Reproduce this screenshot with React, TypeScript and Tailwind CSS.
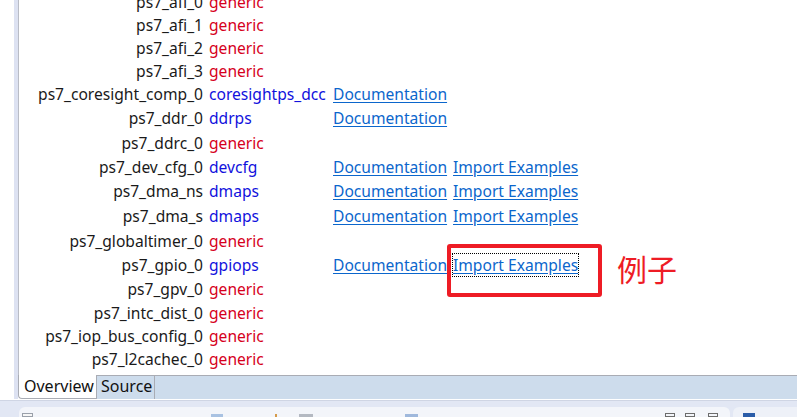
import React from 'react';

type Row = {
  name: string;
  type: string;
  generic: boolean;
  doc?: boolean;
  examples?: boolean;
  h: string;
};

const rows: Row[] = [
  { name: 'ps7_afi_0', type: 'generic', generic: true, h: 'h-[23px]' },
  { name: 'ps7_afi_1', type: 'generic', generic: true, h: 'h-[23px]' },
  { name: 'ps7_afi_2', type: 'generic', generic: true, h: 'h-[23px]' },
  { name: 'ps7_afi_3', type: 'generic', generic: true, h: 'h-[23px]' },
  { name: 'ps7_coresight_comp_0', type: 'coresightps_dcc', generic: false, doc: true, h: 'h-[24px]' },
  { name: 'ps7_ddr_0', type: 'ddrps', generic: false, doc: true, h: 'h-[24px]' },
  { name: 'ps7_ddrc_0', type: 'generic', generic: true, h: 'h-[25px]' },
  { name: 'ps7_dev_cfg_0', type: 'devcfg', generic: false, doc: true, examples: true, h: 'h-[24px]' },
  { name: 'ps7_dma_ns', type: 'dmaps', generic: false, doc: true, examples: true, h: 'h-[24px]' },
  { name: 'ps7_dma_s', type: 'dmaps', generic: false, doc: true, examples: true, h: 'h-[25px]' },
  { name: 'ps7_globaltimer_0', type: 'generic', generic: true, h: 'h-[25px]' },
  { name: 'ps7_gpio_0', type: 'gpiops', generic: false, doc: true, examples: true, h: 'h-[24px]' },
  { name: 'ps7_gpv_0', type: 'generic', generic: true, h: 'h-[24px]' },
  { name: 'ps7_intc_dist_0', type: 'generic', generic: true, h: 'h-[23px]' },
  { name: 'ps7_iop_bus_config_0', type: 'generic', generic: true, h: 'h-[23px]' },
  { name: 'ps7_l2cachec_0', type: 'generic', generic: true, h: 'h-[23px]' },
];

const font = "font-['Noto_Sans','Liberation_Sans',sans-serif]";

export default function App() {
  return (
    <div className={`w-[797px] h-[417px] bg-white overflow-hidden flex flex-col text-[15.6px] ${font}`}>
      {/* editor body */}
      <div className="h-[375px] flex">
        <div className="w-[14px] bg-white" />
        <div className="w-[4px] bg-[#dde2f2]" />
        <div className="w-[1px] bg-[#b9bcc6]" />
        <div className="flex-1 relative overflow-hidden">
          <div className="mt-[-9px] flex flex-col">
            {rows.map((r) => (
              <div key={r.name} className={`flex items-center ${r.h}`}>
                <div className="w-[184px] text-right text-[#1a1a1a] whitespace-nowrap">{r.name}</div>
                <div className={`ml-[6px] w-[124px] whitespace-nowrap ${r.generic ? 'text-[#d6001c]' : 'text-[#1111dd]'}`}>
                  {r.type}
                </div>
                <div className="w-[120px] whitespace-nowrap">
                  {r.doc && <span className="text-[#0b66cc] underline underline-offset-2">Documentation</span>}
                </div>
                <div className="whitespace-nowrap">
                  {r.examples && (
                    <span
                      className={`text-[#0b66cc] underline underline-offset-2 ${
                        r.name === 'ps7_gpio_0' ? 'outline outline-1 outline-dotted outline-black' : ''
                      }`}
                    >
                      Import Examples
                    </span>
                  )}
                </div>
              </div>
            ))}
          </div>

          {/* annotation */}
          <div className="absolute left-[428px] top-[244px] w-[155px] h-[53px] border-[4px] border-[#ee1c25] rounded-[3px]" />
          <div className="absolute left-[598px] top-[249px] text-[30px] leading-[38px] text-[#ee1c25] font-['Noto_Sans_CJK_SC',sans-serif]">
            例子
          </div>
        </div>
      </div>

      {/* tab bar */}
      <div className="h-[24px] flex text-[16px]">
        <div className="w-[14px] bg-white" />
        <div className="w-[4px] bg-[#dde2f2]" />
        <div className="w-[78px] bg-white border-l border-b border-[#a9acb4] rounded-bl-[4px] pl-[5px] leading-[22px] text-[#111]">
          Overview
        </div>
        <div className="w-[59px] bg-[#cddcec] border-t border-l border-r border-[#a9acb4] pl-[4px] leading-[21px] text-[#111]">
          Source
        </div>
        <div className="flex-1 bg-[#cddcec] border-t border-[#a9acb4]" />
      </div>

      {/* bottom area */}
      <div className="flex-1 bg-[#e2e7f4] border-t border-white flex flex-col">
        <div className="h-[1px] bg-[#cfd5e4]" />
        <div className="flex-1 flex items-end gap-[3px] pl-[19px]">
          <div className="w-[711px] h-[10px] bg-[#f3f5fa] rounded-t-[6px] relative">
            <div className="absolute left-[3px] top-[6px] w-[11px] h-[4px] border border-[#9aa0aa] bg-[#f6f6f6]" />
            <div className="absolute left-[192px] top-[7px] w-[12px] h-[3px] bg-[#a9c2e2]" />
            <div className="absolute left-[256px] top-[7px] w-[2px] h-[3px] bg-[#d59a4a]" />
            <div className="absolute left-[280px] top-[7px] w-[14px] h-[3px] bg-[#b4b9c2]" />
            <div className="absolute left-[386px] top-[7px] w-[13px] h-[3px] bg-[#9fb8dc]" />
            <div className="absolute left-[646px] top-[6px] w-[10px] h-[4px] border border-[#6c6c6c]" />
            <div className="absolute left-[666px] top-[6px] w-[10px] h-[4px] border border-[#6c6c6c]" />
            <div className="absolute left-[689px] top-[6px] w-[10px] h-[4px] border border-[#6c6c6c]" />
          </div>
          <div className="flex-1 h-[10px] bg-[#eef1f8] rounded-tl-[6px] relative">
            <div className="absolute left-[10px] top-[6px] w-[12px] h-[4px] border-2 border-[#2a5ca8]" />
          </div>
        </div>
      </div>
    </div>
  );
}
